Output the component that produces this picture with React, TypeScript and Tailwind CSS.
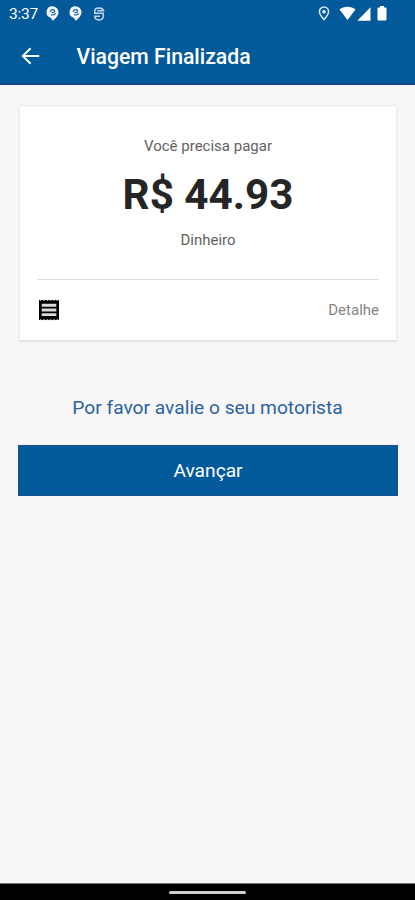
import type { ReactNode } from "react";

function PinBadge() {
  return (
    <svg width="13" height="15" viewBox="0 0 13 15" fill="none">
      <path
        d="M6.500.2a6 6 0 0 1 6 6c0 3.300-3.100 6.300-5.700 8.600-.9-1-1.400-1.900-1.800-2.800A6 6 0 0 1 6.500.2Z"
        fill="#f4f8fc"
      />
      <path
        d="M4 5.900C4.400 4.200 5.500 3.500 6.800 3.600c1.400.1 2 1 1.800 1.900-.3 1-1.700 1.200-3 .9M4.900 8.500c1.700.8 3.700.4 4.800-1.200"
        stroke="#1e66a5"
        strokeWidth="1.200"
      />
    </svg>
  );
}

function StatusGlyph() {
  return (
    <svg width="12" height="14" viewBox="0 0 12 14" fill="none" stroke="#c3d6e8" strokeWidth="1.500">
      <path d="M10.200 3C9.500 1.500 8.100 1 6 1 3.300 1 1.800 2 1.800 3.700v2.600h8.400v3.300c0 2.200-1.400 3.300-4.200 3.300s-4.200-1.100-4.200-3.300v-.3h5.200" />
      <path d="M4.300 3.700h7" />
    </svg>
  );
}

function LocationIcon() {
  return (
    <svg width="12" height="15" viewBox="0 0 12 15" fill="none" stroke="#dce8f4">
      <path
        d="M6 1a4.600 4.600 0 0 1 4.600 4.600C10.600 8.600 6 13.600 6 13.600S1.400 8.600 1.400 5.600A4.600 4.600 0 0 1 6 1Z"
        strokeWidth="1.500"
      />
      <circle cx="6" cy="5.800" r="1.400" fill="#dce8f4" />
    </svg>
  );
}

function StatusBar() {
  return (
    <div className="flex h-[27px] items-center pl-[9px] text-white">
      <span className="w-[36.500px] pt-px text-[15.500px] leading-[26px] tracking-[-0.2px]">3:37</span>
      <PinBadge />
      <span className="ml-[10.500px]">
        <PinBadge />
      </span>
      <span className="ml-[11px]">
        <StatusGlyph />
      </span>
      <div className="ml-auto flex items-center pr-[28px]">
        <LocationIcon />
        <svg className="ml-[9px]" width="17" height="15" viewBox="0 0 17 15" fill="#fff">
          <path d="M0.500 3.600C5-.1 12-.1 16.500 3.600L8.500 14Z" />
        </svg>
        <svg className="ml-[1px]" width="14" height="14" viewBox="0 0 14 14" fill="#fff">
          <path d="M0.300 13.700 13.500.3v13.400Z" />
        </svg>
        <svg className="ml-[6px]" width="10" height="15" viewBox="0 0 10 15" fill="#fff">
          <path d="M3 0h4v1.600h1.500c.6 0 1 .4 1 1v11c0 .6-.4 1-1 1h-7c-.6 0-1-.4-1-1v-11c0-.6.4-1 1-1H3Z" />
        </svg>
      </div>
    </div>
  );
}

function Header({ title }: { title: string }) {
  return (
    <header className="h-[85px] shrink-0 border-b-2 border-[#084a8c] bg-[#025a9b]">
      <StatusBar />
      <div className="flex h-[58px] items-center pl-[21px] text-white">
        <button type="button" aria-label="Voltar">
          <svg width="19" height="18" viewBox="0 0 19 18" fill="none" stroke="#fff" strokeWidth="2">
            <path d="M18.200 9H2M9.600 1.200 1.800 9l7.800 7.800" />
          </svg>
        </button>
        <h1 className="ml-[36.500px] pt-[2px] text-[21.200px] leading-[28px] font-medium whitespace-nowrap">
          {title}
        </h1>
      </div>
    </header>
  );
}

function Card({ children }: { children: ReactNode }) {
  return (
    <section className="mr-[18px] ml-[19px] mt-5 h-[236px] rounded-[2px] border border-[#ececec] border-b-[#e2e2e2] bg-white px-[17px] shadow-[0_1px_2px_rgba(0,0,0,0.08)]">
      {children}
    </section>
  );
}

function ReceiptIcon() {
  return (
    <svg width="20" height="22" viewBox="0 0 20 22">
      <path
        d="M0 .8 1.700 1.800 3.300.8 5 1.800 6.700.8 8.300 1.800 10 .8 11.700 1.800 13.300.8 15 1.800 16.700.8 18.300 1.800 20 .8v20.400L18.300 20.200l-1.600 1L15 20.200l-1.700 1L11.700 20.200 10 21.200 8.300 20.200l-1.600 1L5 20.200l-1.700 1L1.700 20.200 0 21.200Z"
        fill="#000"
      />
      <path d="M2.700 6.200h14.600M2.700 11h14.600M2.700 15.600h14.600" stroke="#dcdcdc" strokeWidth="2.900" />
    </svg>
  );
}

export default function App() {
  return (
    <div className="flex h-[900px] w-[415px] flex-col overflow-hidden bg-[#f8f6f7] font-[Roboto,sans-serif]">
      <Header title="Viagem Finalizada" />

      <main className="flex-1">
        <Card>
          <div className="flex h-[173px] flex-col items-center pt-[30px]">
            <p className="text-[15px] leading-5 text-[#626262]">Você precisa pagar</p>
            <p className="mt-[14px] text-[42.200px] leading-[50px] font-bold text-[#252525]">
              R$ 44.93
            </p>
            <p className="mt-[10px] text-[15px] leading-5 text-[#626262]">Dinheiro</p>
          </div>
          <div className="flex h-[61px] items-center justify-between border-t border-[#dedede] pl-[2px]">
            <ReceiptIcon />
            <span className="text-[15px] text-[#858585]">Detalhe</span>
          </div>
        </Card>

        <p className="mt-[53px] text-center text-[19.200px] leading-7 text-[#2a64a0]">
          Por favor avalie o seu motorista
        </p>
        <div className="mt-[23px] pr-[17px] pl-[18px]">
          <button
            type="button"
            className="h-[51px] w-full border-y border-[#16508c] bg-[#025a9b] pt-[2px] text-[19.200px] text-white"
          >
            Avançar
          </button>
        </div>
      </main>

      <footer className="flex h-[17px] shrink-0 justify-center border-t border-[#777] bg-black pt-[7px]">
        <div className="h-[3px] w-[77px] rounded-full bg-[#d0d0d0]" />
      </footer>
    </div>
  );
}
